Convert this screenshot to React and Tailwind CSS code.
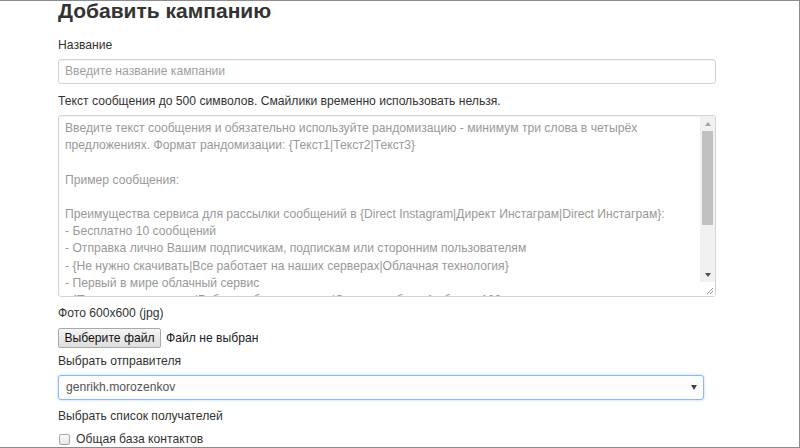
import React from "react";

const lines = [
  "Введите текст сообщения и обязательно используйте рандомизацию - минимум три слова в четырёх",
  "предложениях. Формат рандомизации: {Текст1|Текст2|Текст3}",
  "",
  "Пример сообщения:",
  "",
  "Преимущества сервиса для рассылки сообщений в {Direct Instagram|Директ Инстаграм|Direct Инстаграм}:",
  "- Бесплатно 10 сообщений",
  "- Отправка лично Вашим подписчикам, подпискам или сторонним пользователям",
  "- {Не нужно скачивать|Все работает на наших серверах|Облачная технология}",
  "- Первый в мире облачный сервис",
  "- {Программа не нужна|Работает без установки|Сервис в облаке} - более 100 довольных клиентов",
];

export default function App() {
  return (
    <div
      className="w-[800px] h-[448px] overflow-hidden bg-white border-t border-r border-b border-[#8c8c8c] text-[#333]"
      style={{ fontFamily: '"Liberation Sans", Arial, sans-serif' }}
    >
      <div className="pl-[58px] w-[716px] flex flex-col">
        <h1 className="-mt-[2px] h-[24px] leading-[24px] text-[21px] font-bold text-[#333] whitespace-nowrap">
          Добавить кампанию
        </h1>

        <div className="mt-[14px] h-[17px] leading-[17px] text-[12.15px]">Название</div>
        <div className="mt-[5px] h-[25px] rounded-[3px] border border-[#d4d4d4] shadow-[inset_0_1px_1px_rgba(0,0,0,0.06)] flex items-center px-[6px] text-[12.15px] text-[#a0a0a0]">
          Введите название кампании
        </div>

        <div className="mt-[9px] h-[17px] leading-[17px] text-[12.15px] whitespace-nowrap">
          Текст сообщения до 500 символов. Смайлики временно использовать нельзя.
        </div>
        <div className="mt-[5px] h-[182px] rounded-[3px] border border-[#d4d4d4] shadow-[inset_0_1px_1px_rgba(0,0,0,0.06)] flex overflow-hidden">
          <div className="flex-1 pt-[4px] pl-[6px] text-[12.15px] leading-[17.2px] text-[#999] overflow-hidden">
            {lines.map((l, i) => (
              <div key={i} className="h-[17.2px] whitespace-nowrap">
                {l}
              </div>
            ))}
          </div>
          <div className="w-[15px] flex flex-col bg-[#f1f1f1]">
            <div className="h-[15px] flex items-center justify-center">
              <div className="w-0 h-0 border-l-[3.5px] border-r-[3.5px] border-b-[4px] border-l-transparent border-r-transparent border-b-[#a3a3a3]" />
            </div>
            <div className="mx-[2px] h-[94px] bg-[#c1c1c1]" />
            <div className="flex-1" />
            <div className="h-[15px] flex items-center justify-center">
              <div className="w-0 h-0 border-l-[3.5px] border-r-[3.5px] border-t-[4px] border-l-transparent border-r-transparent border-t-[#505050]" />
            </div>
            <div className="h-[14px] bg-white relative">
              <svg width="15" height="14" viewBox="0 0 15 14" className="absolute inset-0">
                <line x1="13" y1="6" x2="7" y2="12" stroke="#999" strokeWidth="1" />
                <line x1="13" y1="9" x2="10" y2="12" stroke="#999" strokeWidth="1" />
              </svg>
            </div>
          </div>
        </div>

        <div className="mt-[8px] h-[17px] leading-[17px] text-[12.15px]">Фото 600x600 (jpg)</div>
        <div className="mt-[6px] h-[20px] flex items-center text-[12.15px]">
          <div className="h-[20px] w-[103px] flex items-center justify-center rounded-[2px] border border-[#a9a9a9] bg-gradient-to-b from-[#f4f4f4] to-[#dedede] text-[#111]">
            Выберите файл
          </div>
          <span className="ml-[5px] text-[#222]">Файл не выбран</span>
        </div>

        <div className="mt-[5px] h-[17px] leading-[17px] text-[12.15px]">Выбрать отправителя</div>
        <div className="mt-[5px] h-[25px] w-[646px] rounded-[3px] border border-[#8fb8ee] bg-[#fdfdfd] shadow-[0_0_3px_rgba(102,175,233,0.5)] flex items-center pl-[7px] pr-[6px] text-[12.15px] text-[#555]">
          <span className="flex-1">genrikh.morozenkov</span>
          <div className="w-0 h-0 border-l-[3.5px] border-r-[3.5px] border-t-[5px] border-l-transparent border-r-transparent border-t-[#444]" />
        </div>

        <div className="mt-[8px] h-[17px] leading-[17px] text-[12.15px]">Выбрать список получателей</div>
        <div className="mt-[5px] h-[18px] flex items-center text-[12.15px]">
          <div className="ml-[1px] w-[11px] h-[11px] rounded-[2px] border border-[#a6a6a6] bg-gradient-to-b from-[#fafafa] to-[#e6e6e6]" />
          <span className="ml-[6px]">Общая база контактов</span>
        </div>
      </div>
    </div>
  );
}
